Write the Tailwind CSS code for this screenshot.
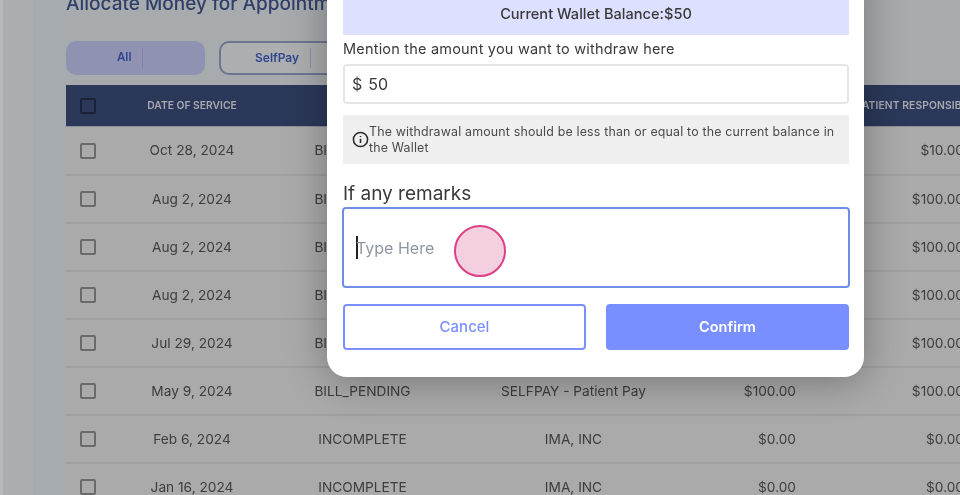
<!doctype html>
<html><head><meta charset="utf-8"><script src="https://cdn.jsdelivr.net/npm/@tailwindcss/browser@4"></script></head>
<body class="m-0 overflow-hidden">
<div class="relative w-[960px] h-[495px] overflow-hidden bg-[#a8abae] font-['Inter',sans-serif] blur-[0.35px]">
  <div class="flex h-full">
    <div class="w-[33px] shrink-0 h-full bg-[#abadae] border-l-[3px] border-[#b6b8b9]"></div>
    <div class="flex-1 min-w-0 bg-[linear-gradient(90deg,#a6abb0_33px,#a8abae_33px)] pl-[33px]">
      <div class="h-[26px] -mt-[9px] text-[19px] leading-[26px] font-medium text-[#2f3f69] whitespace-nowrap w-[260px]">Allocate Money for Appointm</div>
      <div class="flex gap-[14px] mt-[24px] h-[34px]">
        <div class="w-[139px] rounded-[10px] bg-[#8f93b1] flex items-center pl-[51px] text-[11.5px] font-semibold text-[#2f4590]"><span class="w-[25px]">All</span><span class="w-px h-[20px] bg-[#7f84a6]"></span></div>
        <div class="w-[160px] rounded-[10px] border-2 border-[#6d7590] bg-[#acaeb0] flex items-center pl-[34px] text-[12px] font-semibold text-[#2f4590]"><span class="w-[55px]">SelfPay</span><span class="w-px h-[20px] bg-[#8a90a8]"></span></div>
      </div>
      <div class="mt-[10px] w-[898px] text-[13.7px] text-[#3d3d3d]">
        <div class="grid grid-cols-[44px_164px_177px_245px_100px_168px] items-center h-[42px] bg-[#2b3859] border-b border-[#8b8f98] text-[10.3px] font-semibold text-[#a6a9b0] whitespace-nowrap">
          <span class="ml-[14px] w-[16px] h-[16px] rounded-[2px] border-2 border-[#1a2238]"></span>
          <span class="text-center">DATE OF SERVICE</span><span></span><span></span><span></span>
          <span class="ml-[60px] tracking-[0.1px]">PATIENT RESPONSIBILITY</span>
        </div>
        <div class="flex flex-col bg-[#aaaaaa]">
          <div class="grid grid-cols-[44px_164px_177px_245px_100px_168px] items-center h-[49px] border-b-2 border-[#a0a0a0]"><span class="ml-[14px] w-[16px] h-[16px] rounded-[2px] border-2 border-[#6a6a6a]"></span><span class="text-center">Oct 28, 2024</span><span class="text-center">BILL_PENDING</span><span class="text-center">SELFPAY - Patient Pay</span><span class="text-right">$10.00</span><span class="text-right">$10.00</span></div>
          <div class="grid grid-cols-[44px_164px_177px_245px_100px_168px] items-center h-[48px] border-b-2 border-[#a0a0a0]"><span class="ml-[14px] w-[16px] h-[16px] rounded-[2px] border-2 border-[#6a6a6a]"></span><span class="text-center">Aug 2, 2024</span><span class="text-center">BILL_PENDING</span><span class="text-center">SELFPAY - Patient Pay</span><span class="text-right">$100.00</span><span class="text-right">$100.00</span></div>
          <div class="grid grid-cols-[44px_164px_177px_245px_100px_168px] items-center h-[48px] border-b-2 border-[#a0a0a0]"><span class="ml-[14px] w-[16px] h-[16px] rounded-[2px] border-2 border-[#6a6a6a]"></span><span class="text-center">Aug 2, 2024</span><span class="text-center">BILL_PENDING</span><span class="text-center">SELFPAY - Patient Pay</span><span class="text-right">$100.00</span><span class="text-right">$100.00</span></div>
          <div class="grid grid-cols-[44px_164px_177px_245px_100px_168px] items-center h-[48px] border-b-2 border-[#a0a0a0]"><span class="ml-[14px] w-[16px] h-[16px] rounded-[2px] border-2 border-[#6a6a6a]"></span><span class="text-center">Aug 2, 2024</span><span class="text-center">BILL_PENDING</span><span class="text-center">SELFPAY - Patient Pay</span><span class="text-right">$100.00</span><span class="text-right">$100.00</span></div>
          <div class="grid grid-cols-[44px_164px_177px_245px_100px_168px] items-center h-[48px] border-b-2 border-[#a0a0a0]"><span class="ml-[14px] w-[16px] h-[16px] rounded-[2px] border-2 border-[#6a6a6a]"></span><span class="text-center">Jul 29, 2024</span><span class="text-center">BILL_PENDING</span><span class="text-center">SELFPAY - Patient Pay</span><span class="text-right">$100.00</span><span class="text-right">$100.00</span></div>
          <div class="grid grid-cols-[44px_164px_177px_245px_100px_168px] items-center h-[48px] border-b-2 border-[#a0a0a0]"><span class="ml-[14px] w-[16px] h-[16px] rounded-[2px] border-2 border-[#6a6a6a]"></span><span class="text-center">May 9, 2024</span><span class="text-center">BILL_PENDING</span><span class="text-center">SELFPAY - Patient Pay</span><span class="text-right">$100.00</span><span class="text-right">$100.00</span></div>
          <div class="grid grid-cols-[44px_164px_177px_245px_100px_168px] items-center h-[48px] border-b-2 border-[#a0a0a0]"><span class="ml-[14px] w-[16px] h-[16px] rounded-[2px] border-2 border-[#6a6a6a]"></span><span class="text-center">Feb 6, 2024</span><span class="text-center">INCOMPLETE</span><span class="text-center">IMA, INC</span><span class="text-right">$0.00</span><span class="text-right">$0.00</span></div>
          <div class="grid grid-cols-[44px_164px_177px_245px_100px_168px] items-center h-[48px] border-b-2 border-[#a0a0a0]"><span class="ml-[14px] w-[16px] h-[16px] rounded-[2px] border-2 border-[#6a6a6a]"></span><span class="text-center">Jan 16, 2024</span><span class="text-center">INCOMPLETE</span><span class="text-center">IMA, INC</span><span class="text-right">$0.00</span><span class="text-right">$0.00</span></div>
        </div>
      </div>
    </div>
  </div>

  <div class="absolute left-[327px] top-[-40px] w-[537px] h-[417px] bg-white rounded-[20px] shadow-[0_4px_40px_rgba(0,0,0,0.32)] pl-[16px] pr-[15px] flex flex-col text-[#3a3a3a]">
    <div class="shrink-0 h-[75px] flex items-end justify-center bg-[#dde0ff] text-[14.6px] leading-[20px] font-medium pb-[11px]">Current Wallet Balance:$50</div>
    <div class="text-[14.5px] leading-[20px] mt-[4px] tracking-[0.2px]">Mention the amount you want to withdraw here</div>
    <div class="mt-[5px] h-[40px] border-2 border-[#e6e6e6] rounded-[4px] flex items-center pl-[7px] gap-[6px] text-[16px]"><span>$</span><span>50</span></div>
    <div class="mt-[11px] h-[49px] bg-[#efefef] flex items-center pl-[9px] pr-[12px]">
      <svg class="shrink-0" width="17" height="17" viewBox="0 0 24 24" fill="none" stroke="#2a2a2a" stroke-width="2.2"><circle cx="12" cy="12" r="10"/><path d="M12 11v6M12 7v1.6"/></svg>
      <div class="text-[12.4px] leading-[16px] tracking-[0.18px] text-[#4a4a4a]">The withdrawal amount should be less than or equal to the current balance in the Wallet</div>
    </div>
    <div class="text-[19px] leading-[25px] h-[25px] mt-[17px]">If any remarks</div>
    <div class="-mx-px mt-[1px] h-[81px] border-2 border-[#6f8fe6] rounded-[4px] flex items-center pl-[12px] text-[16px] text-[#8f96a3]"><span class="w-[2px] h-[23px] bg-[#222] -mr-[2px]"></span>Type Here</div>
    <div class="flex justify-between mt-[16px]">
      <div class="w-[243px] h-[46px] border-2 border-[#7a90ff] rounded-[4px] flex items-center justify-center text-[#7a90ff] text-[15px] font-medium">Cancel</div>
      <div class="w-[243px] h-[46px] bg-[#7a8fff] rounded-[4px] flex items-center justify-center text-white text-[14.5px] font-semibold">Confirm</div>
    </div>
  </div>
  <div class="absolute left-[454px] top-[225px] w-[52px] h-[52px] rounded-full bg-[#f3cfe0] border-2 border-[#dc4088]"></div>
</div>
</body></html>
